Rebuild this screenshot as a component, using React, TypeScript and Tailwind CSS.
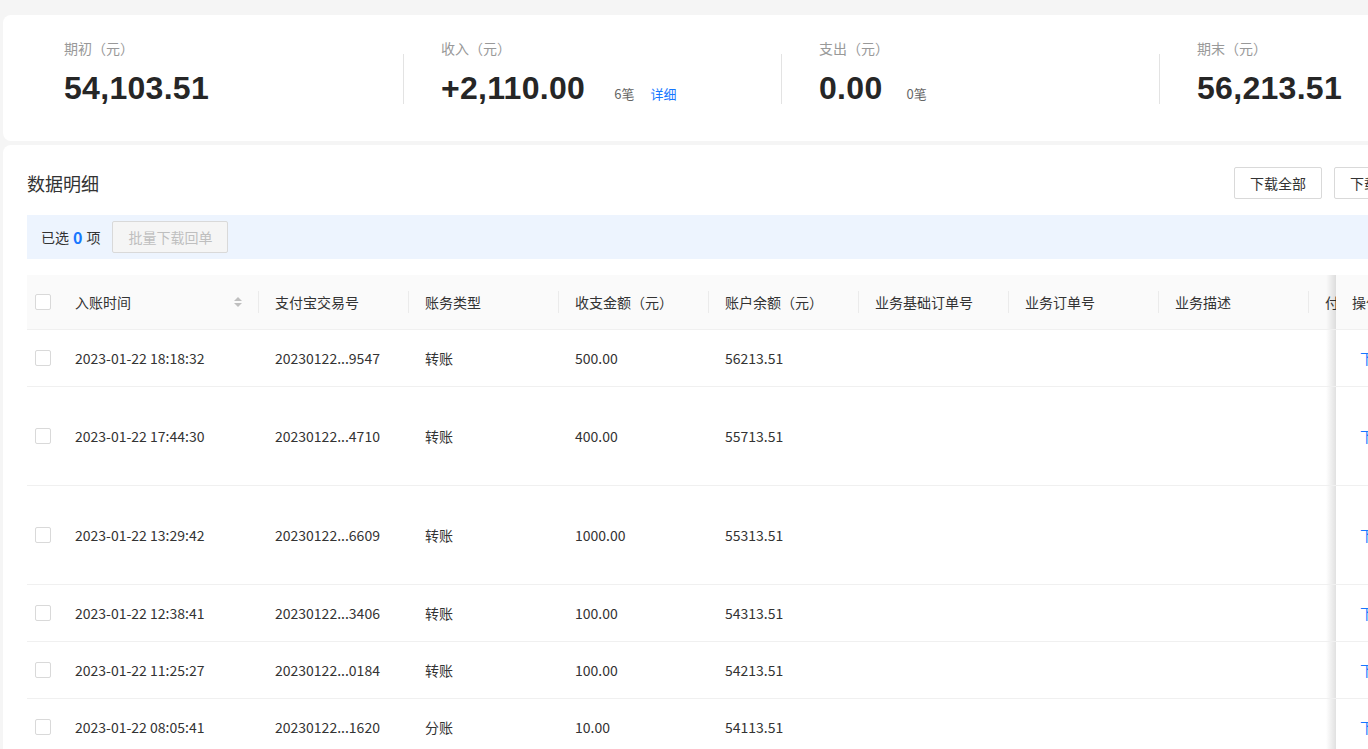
import React from "react";

const font = { fontFamily: '"Noto Sans CJK SC", "Noto Sans", sans-serif' };

interface Stat {
  label: string;
  value: string;
  count?: string;
  countGap?: string;
  detail?: boolean;
}

const stats: Stat[] = [
  { label: "期初（元）", value: "54,103.51" },
  { label: "收入（元）", value: "+2,110.00", count: "6笔", countGap: "ml-[29px]", detail: true },
  { label: "支出（元）", value: "0.00", count: "0笔", countGap: "ml-[24px]" },
  { label: "期末（元）", value: "56,213.51" },
];

interface Row {
  time: string;
  tradeNo: string;
  type: string;
  amount: string;
  balance: string;
  tall?: boolean;
}

const rows: Row[] = [
  { time: "2023-01-22 18:18:32", tradeNo: "20230122...9547", type: "转账", amount: "500.00", balance: "56213.51" },
  { time: "2023-01-22 17:44:30", tradeNo: "20230122...4710", type: "转账", amount: "400.00", balance: "55713.51", tall: true },
  { time: "2023-01-22 13:29:42", tradeNo: "20230122...6609", type: "转账", amount: "1000.00", balance: "55313.51", tall: true },
  { time: "2023-01-22 12:38:41", tradeNo: "20230122...3406", type: "转账", amount: "100.00", balance: "54313.51" },
  { time: "2023-01-22 11:25:27", tradeNo: "20230122...0184", type: "转账", amount: "100.00", balance: "54213.51" },
  { time: "2023-01-22 08:05:41", tradeNo: "20230122...1620", type: "分账", amount: "10.00", balance: "54113.51" },
];

const headers = ["支付宝交易号", "账务类型", "收支金额（元）", "账户余额（元）", "业务基础订单号", "业务订单号", "业务描述", "付款方"];

function Checkbox() {
  return <span className="block w-4 h-4 rounded-[2px] border border-[#d9d9d9] bg-white" />;
}

function SortIcon() {
  return (
    <svg width="10" height="12" viewBox="0 0 10 12" className="text-[#bfbfbf]">
      <path d="M5 1 L9 5 L1 5 Z" fill="currentColor" />
      <path d="M5 11 L9 7 L1 7 Z" fill="currentColor" />
    </svg>
  );
}

function HeaderCell({ text, last }: { text: string; last?: boolean }) {
  return (
    <div className="relative w-[150px] shrink-0 flex items-center px-4 whitespace-nowrap overflow-hidden">
      {text}
      {!last && <span className="absolute right-0 top-1/2 -translate-y-1/2 w-px h-[22px] bg-[#ebebeb]" />}
    </div>
  );
}

function Cell({ children }: { children?: React.ReactNode }) {
  return <div className="w-[150px] shrink-0 flex items-center px-4 whitespace-nowrap">{children}</div>;
}

// fixed right column: the shade lies over the scrolled cells beside it
function FixedCell({ className, children }: { className: string; children: React.ReactNode }) {
  return (
    <div className={`relative w-[86px] shrink-0 flex items-center ${className}`}>
      <span className="absolute -left-[10px] top-0 bottom-0 w-[10px] bg-gradient-to-l from-black/[0.12] to-transparent" />
      {children}
    </div>
  );
}

export default function App() {
  return (
    <div className="w-[1368px] h-[749px] overflow-hidden bg-[#f5f5f5] pt-[15px] pl-[3px] text-[#333]" style={font}>
      {/* Summary card */}
      <div className="w-[1443px] h-[126px] bg-white rounded-lg pl-[22px] pt-[22px] flex overflow-hidden">
        {stats.map((s, i) => (
          <div key={s.label} className="w-[378px] shrink-0 flex items-start">
            {i > 0 && <span className="w-px h-[50px] mt-[17px] bg-[#e3e3e3] shrink-0" />}
            <div className={i > 0 ? "pl-[37px]" : "pl-[39px]"}>
              <div className="text-[14px] leading-[22px] text-[#999]">{s.label}</div>
              <div className="mt-[9px] flex items-baseline">
                <span
                  className="text-[32px] leading-[40px] font-bold text-[#262626] tracking-[0.3px]"
                  style={{ fontFamily: '"Liberation Sans", Arial, sans-serif' }}
                >
                  {s.value}
                </span>
                {s.count && <span className={`${s.countGap} text-[13px] text-[#666]`}>{s.count}</span>}
                {s.detail && <span className="ml-[16px] text-[13px] text-[#1677ff]">详细</span>}
              </div>
            </div>
          </div>
        ))}
      </div>

      {/* Detail card */}
      <div className="mt-[4px] w-[1443px] h-[700px] bg-white rounded-lg px-[24px] pt-[22px]">
        <div className="flex items-center h-[32px]">
          <h2 className="text-[18px] text-[#333] font-normal">数据明细</h2>
          <div className="ml-auto flex gap-3">
            <button className="h-[32px] px-[15px] border border-[#d9d9d9] rounded-[2px] bg-white text-[14px] text-[#333]">下载全部</button>
            <button className="h-[32px] px-[15px] border border-[#d9d9d9] rounded-[2px] bg-white text-[14px] text-[#333]">下载明细</button>
          </div>
        </div>

        <div className="mt-[16px] h-[44px] bg-[#edf4fe] flex items-center pl-[14px] text-[14px]">
          <span>已选</span>
          <span className="mx-[4px] text-[#1677ff] font-bold text-[16px]">0</span>
          <span>项</span>
          <button className="ml-[12px] h-[32px] w-[116px] border border-[#d9d9d9] rounded-[2px] bg-[#f5f5f5] text-[14px] text-[#bfbfbf]">
            批量下载回单
          </button>
        </div>

        {/* Table */}
        <div className="mt-[16px] text-[14px] text-[#333]">
          <div className="flex h-[55px] bg-[#fafafa] border-b border-[#f0f0f0]">
            <div className="w-[1309px] shrink-0 flex overflow-hidden">
              <div className="w-[32px] shrink-0 flex items-center justify-center">
                <Checkbox />
              </div>
              <div className="relative w-[200px] shrink-0 flex items-center pl-4 pr-4">
                <span>入账时间</span>
                <span className="ml-auto">
                  <SortIcon />
                </span>
                <span className="absolute right-0 top-1/2 -translate-y-1/2 w-px h-[22px] bg-[#ebebeb]" />
              </div>
              {headers.map((h, i) => (
                <HeaderCell key={h} text={h} last={i === headers.length - 1} />
              ))}
            </div>
            <FixedCell className="pl-4 bg-[#fafafa]">操作</FixedCell>
          </div>

          {rows.map((r) => (
            <div key={r.time} className={`flex border-b border-[#f0f0f0] ${r.tall ? "h-[99px]" : "h-[57px]"}`}>
              <div className="w-[1309px] shrink-0 flex overflow-hidden">
                <div className="w-[32px] shrink-0 flex items-center justify-center">
                  <Checkbox />
                </div>
                <div className="w-[200px] shrink-0 flex items-center px-4 whitespace-nowrap">{r.time}</div>
                <Cell>{r.tradeNo}</Cell>
                <Cell>{r.type}</Cell>
                <Cell>{r.amount}</Cell>
                <Cell>{r.balance}</Cell>
                <Cell />
                <Cell />
                <Cell />
                <Cell />
              </div>
              <FixedCell className="pl-6 bg-white text-[#1677ff]">下载回单</FixedCell>
            </div>
          ))}
        </div>
      </div>
    </div>
  );
}
